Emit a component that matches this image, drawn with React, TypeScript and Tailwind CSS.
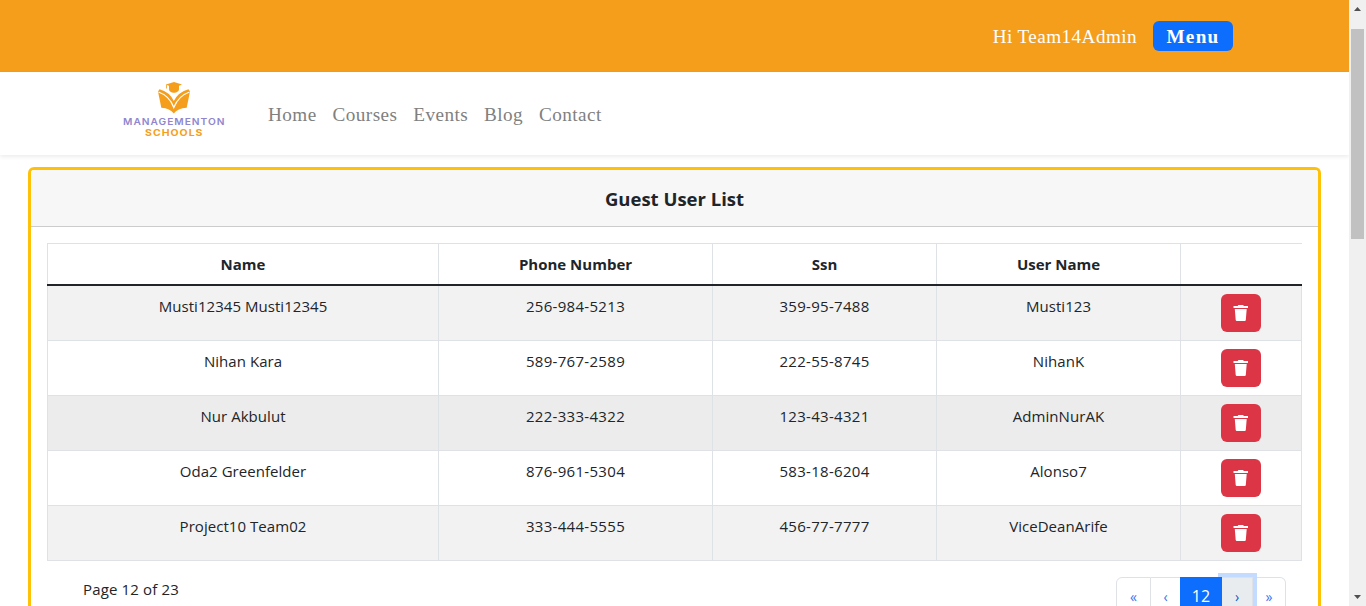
import React from "react";

const users = [
  { name: "Musti12345 Musti12345", phone: "256-984-5213", ssn: "359-95-7488", user: "Musti123", bg: "bg-[#f2f2f2]" },
  { name: "Nihan Kara", phone: "589-767-2589", ssn: "222-55-8745", user: "NihanK", bg: "bg-white" },
  { name: "Nur Akbulut", phone: "222-333-4322", ssn: "123-43-4321", user: "AdminNurAK", bg: "bg-[#ececec]" },
  { name: "Oda2 Greenfelder", phone: "876-961-5304", ssn: "583-18-6204", user: "Alonso7", bg: "bg-white" },
  { name: "Project10 Team02", phone: "333-444-5555", ssn: "456-77-7777", user: "ViceDeanArife", bg: "bg-[#f2f2f2]" },
];

const headings = ["Name", "Phone Number", "Ssn", "User Name", ""];
const columns = "grid grid-cols-[391px_274px_224px_244px_122px]";
const cell = "border-l border-[#dee2e6] pt-2";

function Logo() {
  return (
    <svg width="110" height="60" viewBox="0 0 110 60" className="block">
      <g fill="#f59e1b">
        <path d="M55 2 L63 4.6 L60 5.8 V9 C60 14 50 14 50 9 V5.8 L47.8 5.1 V8.6 H47 V4.6 Z" />
        <path d="M40.5 9.3 Q50.5 12 54.8 21 Q59.5 12 69.5 9.3 L71 11.5 L67.7 27.8 Q58.5 28.5 54.8 33.4 Q51 28.5 42.3 27.8 L39 11.5 Z" />
      </g>
      <path d="M39.5 12 Q50.5 15.8 54.8 27.5 Q59.5 15.8 70.5 12" fill="none" stroke="#fff" strokeWidth="1.3" />
      <text x="4" y="45.3" fontFamily="Inter, sans-serif" fontWeight="600" fontSize="9.2" letterSpacing="0.9" textLength="102.5" lengthAdjust="spacingAndGlyphs" fill="#8f86cf">
        MANAGEMENTON
      </text>
      <text x="26" y="56.2" fontFamily="Inter, sans-serif" fontWeight="700" fontSize="9.2" letterSpacing="0.9" textLength="58.5" lengthAdjust="spacingAndGlyphs" fill="#f59e1b">
        SCHOOLS
      </text>
    </svg>
  );
}

function Trash() {
  return (
    <svg width="16" height="16" viewBox="0 0 16 16" fill="#fff" className="block">
      <path d="M0.5 1 H4.7 L5.4 0.1 H10.1 L10.8 1 H15 V3 H0.5 Z M1.8 4 H13.7 L12.8 15 Q12.7 16 11.7 16 H3.8 Q2.8 16 2.7 15 Z" />
    </svg>
  );
}

function DeleteButton() {
  return (
    <button className="flex h-[38px] w-10 items-center justify-center rounded-md bg-[#dc3545]">
      <Trash />
    </button>
  );
}

function Scrollbar() {
  return (
    <div className="flex w-[17px] shrink-0 flex-col items-center bg-[#f0f0f0]">
      <div className="flex h-[29px] w-full justify-center pt-[7px]">
        <svg width="7" height="4" viewBox="0 0 7 4" className="block"><path d="M0 4 L3.5 0 L7 4 Z" fill="#505050" /></svg>
      </div>
      <div className="h-[210px] w-[13px] bg-[#c1c1c1]" />
      <div className="mt-auto pb-[7px]">
        <svg width="7" height="4" viewBox="0 0 7 4" className="block"><path d="M0 0 L3.5 4 L7 0 Z" fill="#505050" /></svg>
      </div>
    </div>
  );
}

export default function App() {
  return (
    <div className="flex h-[606px] w-[1366px] overflow-hidden bg-white font-['Open_Sans',sans-serif] text-[15px] leading-6 text-[#212529]">
      <div className="flex min-w-0 flex-1 flex-col">
        <header className="flex h-[72px] shrink-0 items-center justify-end gap-4 bg-[#f59e1b] pr-[116px] font-['Liberation_Serif',serif] text-[19.2px] text-white">
          <span className="pt-px tracking-[0.42px]">Hi Team14Admin</span>
          <button className="h-[30px] w-20 rounded-md bg-[#0d6efd] font-bold leading-[31px] tracking-[1.3px]">Menu</button>
        </header>
        <nav className="flex h-[83px] shrink-0 items-start bg-white pl-[119px] pt-2 shadow-[0_2px_4px_rgba(0,0,0,0.075)]">
          <Logo />
          <div className="ml-[39px] mt-[23px] flex gap-4 font-['Liberation_Serif',serif] text-[19.2px] tracking-[0.42px] text-[#808080]">
            <a>Home</a>
            <a>Courses</a>
            <a>Events</a>
            <a>Blog</a>
            <a>Contact</a>
          </div>
        </nav>
        <main className="ml-7 mt-3 w-[1293px] flex-1 rounded-t-md border-x-[3px] border-t-[3px] border-[#ffc107]">
          <h1 className="h-[57px] rounded-t-[3px] border-b border-[#cccccc] bg-[#f7f7f7] text-center text-[18.5px] font-bold leading-[58px]">
            Guest User List
          </h1>
          <div className="px-4 pt-4">
            <div className={columns + " h-[43px] border-b-2 border-[#212529] text-center font-bold"}>
              {headings.map((h) => (
                <div key={h} className="border-l border-t border-[#dee2e6] pt-2">{h}</div>
              ))}
            </div>
            {users.map((u) => (
              <div key={u.user} className={columns + " h-[55px] border-b border-[#dee2e6] text-center " + u.bg}>
                <div className={cell + " tracking-[0.05px]"}>{u.name}</div>
                <div className={cell + " tracking-[0.3px]"}>{u.phone}</div>
                <div className={cell + " tracking-[0.3px]"}>{u.ssn}</div>
                <div className={cell + " tracking-[0.05px]"}>{u.user}</div>
                <div className="flex justify-center border-x border-[#dee2e6] pt-2">
                  <DeleteButton />
                </div>
              </div>
            ))}
            <div className="flex justify-between pl-9 pr-4 pt-4">
              <span className="tracking-[0.15px]">Page 12 of 23</span>
              <div className="flex h-[38px] text-center text-[14px] leading-[37px] text-[#3b74f0]">
                <span className="w-[35px] rounded-l-md border border-[#dee2e6]">«</span>
                <span className="w-[29px] border-y border-[#dee2e6]">‹</span>
                <span className="z-10 w-[42px] bg-[#0d6efd] text-[16px] leading-[39px] text-white">12</span>
                <span className="z-[5] w-[31px] border border-l-0 border-[#dee2e6] bg-[#e9ecef] text-[#0a58ca] shadow-[0_0_0_4px_#c2dbfe]">›</span>
                <span className="w-[33px] rounded-r-md border border-l-0 border-[#dee2e6]">»</span>
              </div>
            </div>
          </div>
        </main>
      </div>
      <Scrollbar />
    </div>
  );
}
